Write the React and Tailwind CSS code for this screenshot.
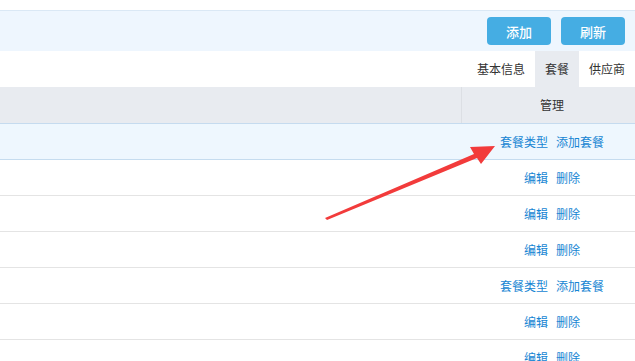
import React from 'react';

const rows = [
    { links: ['套餐类型', '添加套餐'], active: true },
    { links: ['编辑', '删除'] },
    { links: ['编辑', '删除'] },
    { links: ['编辑', '删除'] },
    { links: ['套餐类型', '添加套餐'] },
    { links: ['编辑', '删除'] },
    { links: ['编辑', '删除'] },
];

const App = () => {
    return (
        <div className="relative w-[635px] h-[361px] overflow-hidden bg-white text-[12px] text-[#333]" style={{ fontFamily: '"Noto Sans CJK SC", "Liberation Sans", sans-serif' }}>
            {/* toolbar */}
            <div className="h-[10px]"></div>
            <div className="h-[41px] bg-[#eef6fe] border-t border-[#dae8f5] flex items-start justify-end gap-[10px] pr-[10px] pt-[6px]">
                <button className="w-[64px] h-[28px] rounded-[4px] bg-[#45ade3] text-white text-[13px] font-medium leading-none">添加</button>
                <button className="w-[64px] h-[28px] rounded-[4px] bg-[#45ade3] text-white text-[13px] font-medium leading-none">刷新</button>
            </div>

            {/* tabs */}
            <div className="h-[36px] flex justify-end items-stretch pr-[10px]">
                <div className="px-[10px] flex items-center">基本信息</div>
                <div className="px-[10px] flex items-center bg-[#e8ebf0]">套餐</div>
                <div className="pl-[10px] flex items-center">供应商</div>
            </div>

            {/* table */}
            <div className="w-[642px]">
                <div className="flex h-[37px] bg-[#e8ebf0] border-b border-[#c5dbef]">
                    <div className="flex-1 border-r border-[#dcdfe4]"></div>
                    <div className="w-[180px] flex items-center justify-center">管理</div>
                </div>
                {rows.map((row, i) => (
                    <div key={i} className={`flex h-[36px] border-b ${row.active ? 'bg-[#eef7fe] border-[#c5dcef]' : 'border-[#e4e4e4]'}`}>
                        <div className="flex-1"></div>
                        <div className="w-[180px] flex items-center justify-center gap-[8px] text-[#1685d3]">
                            <span>{row.links[0]}</span>
                            <span>{row.links[1]}</span>
                        </div>
                    </div>
                ))}
            </div>

            {/* red arrow annotation */}
            <svg className="absolute left-0 top-0 pointer-events-none" width="635" height="361">
                <polygon points="325,218 474,154 470,147 495,146 481,164 477,158 327,220" fill="#f23b3b" />
            </svg>
        </div>
    );
};

export default App;
